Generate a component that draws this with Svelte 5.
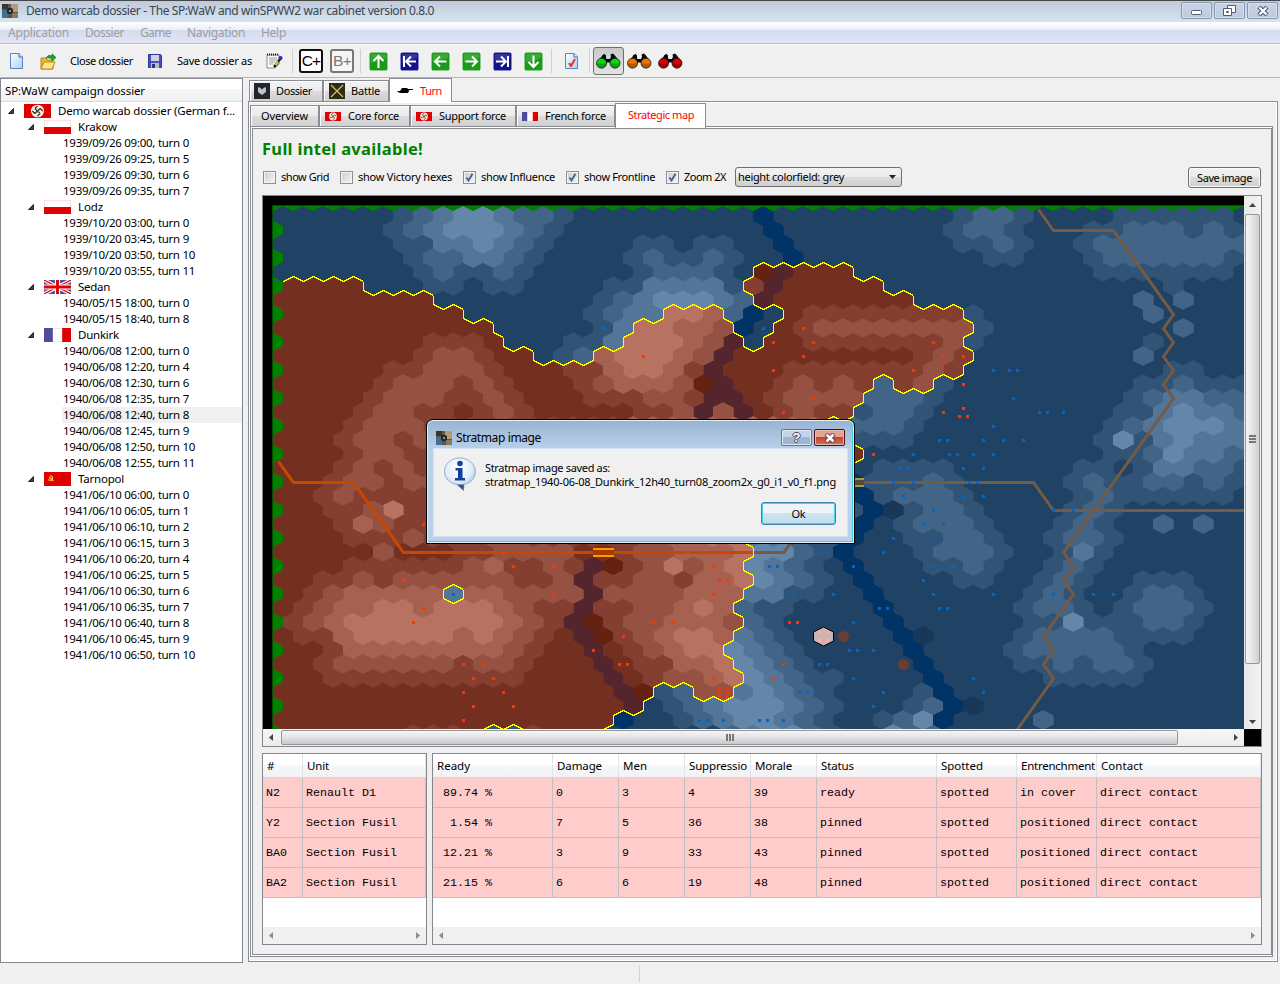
<script>
  // Sets letter spacing so a label takes a given width in pixels
  function fit(node, width) {
    const natural = node.getBoundingClientRect().width;
    const n = node.textContent.length;
    node.style.letterSpacing = (width - natural) / n + 'px';
  }

  const menus = [['Application', 61], ['Dossier', 39], ['Game', 31], ['Navigation', 58], ['Help', 25]];

  const tree = [
    { t: 'Demo warcab dossier (German f...', l: 0, flag: 'de', w: 177 },
    { t: 'Krakow', l: 1, flag: 'pl', w: 39 },
    { t: '1939/09/26 09:00, turn 0' }, { t: '1939/09/26 09:25, turn 5' },
    { t: '1939/09/26 09:30, turn 6' }, { t: '1939/09/26 09:35, turn 7' },
    { t: 'Lodz', l: 1, flag: 'pl', w: 25 },
    { t: '1939/10/20 03:00, turn 0' }, { t: '1939/10/20 03:45, turn 9' },
    { t: '1939/10/20 03:50, turn 10' }, { t: '1939/10/20 03:55, turn 11' },
    { t: 'Sedan', l: 1, flag: 'uk', w: 32 },
    { t: '1940/05/15 18:00, turn 0' }, { t: '1940/05/15 18:40, turn 8' },
    { t: 'Dunkirk', l: 1, flag: 'fr', w: 41 },
    { t: '1940/06/08 12:00, turn 0' }, { t: '1940/06/08 12:20, turn 4' },
    { t: '1940/06/08 12:30, turn 6' }, { t: '1940/06/08 12:35, turn 7' },
    { t: '1940/06/08 12:40, turn 8', sel: true }, { t: '1940/06/08 12:45, turn 9' },
    { t: '1940/06/08 12:50, turn 10' }, { t: '1940/06/08 12:55, turn 11' },
    { t: 'Tarnopol', l: 1, flag: 'su', w: 46 },
    { t: '1941/06/10 06:00, turn 0' }, { t: '1941/06/10 06:05, turn 1' },
    { t: '1941/06/10 06:10, turn 2' }, { t: '1941/06/10 06:15, turn 3' },
    { t: '1941/06/10 06:20, turn 4' }, { t: '1941/06/10 06:25, turn 5' },
    { t: '1941/06/10 06:30, turn 6' }, { t: '1941/06/10 06:35, turn 7' },
    { t: '1941/06/10 06:40, turn 8' }, { t: '1941/06/10 06:45, turn 9' },
    { t: '1941/06/10 06:50, turn 10' }
  ];

  const checks = [['show Grid', 48, false, 10], ['show Victory hexes', 94, false, 10], ['show Influence', 74, true, 10], ['show Frontline', 71, true, 10], ['Zoom 2X', 42, true, 9]];

  const units = [['N2', 'Renault D1'], ['Y2', 'Section Fusil'], ['BA0', 'Section Fusil'], ['BA2', 'Section Fusil']];
  const heads = [['Ready', 33], ['Damage', 45], ['Men', 24], ['Suppressio', 58], ['Morale', 37], ['Status', 33], ['Spotted', 42], ['Entrenchment', 74], ['Contact', 42]];
  const stats = [
    [' 89.74 %', '0', '3', '4', '39', 'ready', 'spotted', 'in cover', 'direct contact'],
    ['  1.54 %', '7', '5', '36', '38', 'pinned', 'spotted', 'positioned', 'direct contact'],
    [' 12.21 %', '3', '9', '33', '43', 'pinned', 'spotted', 'positioned', 'direct contact'],
    [' 21.15 %', '6', '6', '19', '48', 'pinned', 'spotted', 'positioned', 'direct contact']
  ];

  // Hex rows: terrain letter followed by the first column it applies to.
  // Lower case is blue territory, upper case is red; w water, k marsh.
  const terrain = [
    'a0 b6 c7 d8 e9 d11 c12 b14 a15 w24 a25 b34 c35 b37 a38 b42 a48',
    'a0 b5 c6 d7 e8 d11 c12 b13 a14 w24 a25 b33 c34 b36 a37 b40 c42 b45 c46 b47',
    'a0 b6 d8 e10 d11 c12 b13 a14 b18 a20 b21 a23 w25 a26 b34 c36 b37 a38 b40 c41',
    'a0 b6 c7 d9 c11 b12 a13 b17 c18 b19 c21 b22 a23 w25 a26 b35 a37 b40 c41 b47',
    'a0 b7 c8 b9 c11 b12 a13 b18 c19 b22 a23 K24 W25 A26 a29 b41 a48',
    'A0 a4 b7 a9 b10 a12 b16 d18 b22 B23 W24 A25 a30 b44 a45',
    'A0 a8 b16 c17 d18 e19 d22 c23 W24 A25 a32 c43 a44 c45 a46',
    'A0 a9 b15 c16 d17 E19 D21 c22 w23 a24 A25 B26 b34 a35 c43 a44',
    'A0 a11 b16 d17 E18 D20 C22 w23 a24 A25 B26 C27 b35 a36 c45 a46',
    'A0 B7 A10 a11 b14 d16 E17 D20 C21 W22 a23 A24 B26 C33 b34 a35 b43 a44',
    'A0 B7 C8 B10 A11 a13 b14 c15 D16 E17 D20 C21 W22 A23 B32 C33 B34 a35 c43 a44',
    'A0 B5 C7 B10 A11 B14 D16 E17 D19 B20 W21 A22 B25 C32 B33 a34 b44 a46',
    'A0 B5 C6 B9 C10 B11 A12 B15 C16 D17 C20 K21 W22 A23 B25 C26 B27 C28 B29 c30 B31 C32 b33 a34 b43 c45 b46',
    'A0 B4 C5 B8 C10 B11 A12 B15 C18 B20 W21 A23 B24 C25 c29 b32 a33 b42 c43 d44 c46',
    'A0 B4 C5 B7 A9 B10 C11 B12 A13 B18 C20 W21 C22 W23 A24 B25 C26 B27 b29 c30 b32 a33 b42 d44 e45 d46 c48',
    'A0 B3 C4 B7 D17 c27 b31 a32 b41 c42 d43 e44 d47',
    'A0 B3 C4 B6 C7 b29 a32 b41 e42 b43 d44 e45 d46',
    'A0 B3 C4 B6 A28 a29 b41 c43 e44 d45 c47',
    'A0 B3 C4 B5 C6 B7 a29 b30 a34 b40 a42 b43 d44 c46 b48',
    'A0 B2 C3 B5 C6 w28 b29 c32 b33 a34 b39 c40 b41 c43 b45 c46 b47',
    'A0 B2 C3 B4 w29 b30 c31 b34 a35 b40 c41 b42 a48',
    'A0 B2 C4 E5 B6 b28 w29 k30 b31 c32 b34 a35 b39 c40 b41 a42',
    'A0 B3 D4 C5 B6 w29 a30 b31 c32 b35 a36 b39 c40 b41 a42 c44 a45 c46 a47',
    'A0 B3 C6 B7 C10 B12 C18 D19 E21 d23 c25 b26 w28 a29 b31 c33 b35 a36 b38 c39 b41 a42',
    'A0 C5 A6 B9 C11 A15 B17 C18 D20 E23 e24 c26 b27 w28 a29 b32 c33 b36 a37 b39 d40 b41 a42',
    'A0 B3 C9 D10 B11 C13 B14 W15 K16 B17 C18 E19 C20 D21 E22 e23 d24 c25 b26 a27 w28 a29 b32 c34 b35 a36 b38 c39 b40 a41',
    'A0 B2 C4 B5 C6 B12 C14 W15 B16 C18 B20 D21 E23 e24 d25 c26 b27 a28 w29 a30 b34 a36 b38 c39 b40 a41 b43 a46',
    'A0 B1 C2 D3 d8 D9 C11 W15 C16 D20 d23 b25 a27 w29 a30 b37 c38 b39 a40 b42 c43 b45 a46',
    'A0 B1 C2 D3 E5 D7 E8 D11 C12 B13 W15 B16 C18 D20 E21 D22 c23 b24 a26 w30 a31 b37 c38 b40 a41 b42 c43 b46 a47',
    'B0 C1 D2 E3 D11 C12 B13 W14 K15 B16 C17 D19 C22 c23 b24 a25 w30 a31 b37 e39 b40 c43 b45 a46',
    'A0 B1 D3 E4 D9 E10 D11 C12 B13 A14 W15 K16 B17 C18 D19 E20 D22 d23 c24 b25 a26 w31 k32 a33 b37 c38 b42 a46',
    'A0 B2 D3 C11 B12 A13 W15 A16 B17 C18 D19 E20 e22 d23 c24 b25 a26 w31 a32 b36 c37 b42 a43',
    'A0 B2 C3 B9 C10 B12 A13 W16 A17 B18 D20 E22 e23 d24 c25 b26 a27 w32 a33 b37 c39 b40 c41 b43 a44',
    'A0 B2 A12 W16 A17 B18 C19 D21 E22 e23 d24 c25 b26 a28 w32 a33 b38 a43',
    'A0 W17 K18 b19 c20 C21 d23 e24 d25 c26 b27 a28 b32 w33 a34',
    'A0 W17 a18 b19 c20 d21 e22 d25 c26 b27 a28 b31 c32 w33 k34 a35',
    'A0 w17 a18 b20 c21 d22 e23 d25 c26 b27 a28 b30 c31 e32 w33 a34 c38 a39',
    'A0 B6 A9 b10 B12 A13 a16 c22 d23 e24 c26 b27 a28 e30 c31 a33'
  ];
  const fills = {
    a: '#204264', b: '#315375', c: '#426486', d: '#537597', e: '#6486a8', w: '#003366', k: '#18385a',
    A: '#733020', B: '#843f30', C: '#955141', D: '#a66151', E: '#b77262', W: '#54252d', K: '#662211'
  };
  const COLS = 49;
  const grid = terrain.map((row) => {
    const out = [];
    const runs = row.split(' ').map((s) => [s[0], +s.slice(1)]);
    runs.forEach(([k, s], i) => {
      const end = i + 1 < runs.length ? runs[i + 1][1] : COLS;
      for (let c = s; c < end; c++) out[c] = k;
    });
    return out;
  });
  const isRed = (k) => k < 'a';
  const hexAt = (x, y) => `M${x} ${y + 5}l10 -5l10 5v9l-10 5l-10 -5z`;
  const hexes = {};
  let front = '';
  grid.forEach((row, r) => {
    const odd = r % 2;
    row.forEach((k, c) => {
      const x = 273 + 20 * c + odd * 10;
      const y = 206.5 + 14 * r;
      hexes[k] = (hexes[k] || '') + hexAt(x, y);
      const red = isRed(k);
      const right = row[c + 1];
      const next = grid[r + 1] || [];
      const dl = next[c - 1 + odd];
      const dr = next[c + odd];
      if (right && isRed(right) !== red) front += `M${x + 20.5} ${y + 5}v9`;
      if (dl && isRed(dl) !== red) front += `M${x + 0.5} ${y + 14}l10 5`;
      if (dr && isRed(dr) !== red) front += `M${x + 10.5} ${y + 19}l10 -5`;
    });
  });

  const redDots = '643,356 803,328 773,342 813,342 803,356 773,370 913,370 813,398 783,412 873,454 933,342 943,356 963,356 963,384 943,412 963,408 959,416 967,416 423,524 403,580 423,608 413,622 503,552 513,566 553,566 553,594 463,664 483,664 473,678 493,678 463,692 503,692 473,706 513,706 463,720 723,552 713,566 719,580 727,580 713,594 653,622 673,622 789,622 797,622 623,636 593,650 619,664 627,664 783,664 713,678 773,678 719,688 727,688 719,692 727,692 719,696 727,696';
  const blueDots = '603,328 763,328 913,454 899,468 907,468 993,370 1009,370 1017,370 1013,398 1039,412 1047,412 1063,412 993,426 939,440 947,440 983,440 1003,440 1023,440 949,454 957,454 973,454 993,454 963,468 983,468 453,594 893,482 913,482 903,496 893,538 883,552 819,552 827,552 853,566 769,566 777,566 793,594 833,594 879,608 887,608 853,622 849,650 857,650 873,650 819,664 827,664 853,678 799,692 807,692 883,692 873,706 699,720 707,720 723,720 759,720 767,720 783,720 969,482 977,482 963,496 983,496 933,510 1053,510 1073,510 923,524 943,524 933,538 933,566 953,566 923,580 933,594 993,594 1053,594 1093,594 1113,594 939,608 947,608 973,678 983,692';
  const dots = (s) => s.split(' ').map((p) => { const [x, y] = p.split(','); return `M${x - 1} ${y - 1}h3v3h-3z`; }).join('');
</script>

{#snippet flag(kind, w, h)}
  <svg class="flag" width={w} height={h} viewBox="0 0 26 14" preserveAspectRatio="none">
    {#if kind === 'de'}
      <rect width="26" height="14" fill="#e00000" />
      <circle cx="13" cy="7" r="6.3" fill="#f4efe8" />
      <g transform="rotate(45 13 7)" stroke="#4b3a2c" stroke-width="1.4" fill="none">
        <path d="M13 3.4V10.6M9.4 7H16.6M13 3.4H16.6M16.6 7V10.6M13 10.6H9.4M9.4 7V3.4" />
      </g>
    {:else if kind === 'pl'}
      <rect width="26" height="14" fill="#ffdede" /><rect x="1" y="1" width="24" height="7" fill="#fff" />
      <rect y="7" width="26" height="7" fill="#e00000" />
    {:else if kind === 'fr'}
      <rect width="26" height="14" fill="#fff" /><path d="M9 .5h9M9 13.500h9" stroke="#ffdede" /><rect width="8.500" height="14" fill="#4d4d9b" /><rect x="17.500" width="8.500" height="14" fill="#e00000" />
    {:else if kind === 'su'}
      <rect width="26" height="14" fill="#e00000" />
      <path d="M6 3.5q3 1 2 4q-2 1.500 -4 0M5 5l4 4" stroke="#ffd21c" stroke-width="1.200" fill="none" />
    {:else}
      <rect width="26" height="14" fill="#4d4d9b" />
      <path d="M0 0L26 14M26 0L0 14" stroke="#fff" stroke-width="3.600" />
      <path d="M0 0L26 14M26 0L0 14" stroke="#e00000" stroke-width="1.200" />
      <path d="M13 0V14M0 7H26" stroke="#fff" stroke-width="5" />
      <path d="M13 0V14M0 7H26" stroke="#e00000" stroke-width="2.800" />
    {/if}
  </svg>
{/snippet}

{#snippet appIcon()}
  <svg width="16" height="14" viewBox="0 0 16 14">
    <rect width="16" height="14" fill="#5d5547" /><rect width="6" height="5" fill="#3c342c" /><rect x="9" width="7" height="8" fill="#b29a7c" />
    <rect y="6" width="6" height="8" fill="#3f6f94" /><rect x="5" y="4" width="6" height="6" rx="2" fill="#24262a" /><rect x="7" y="6" width="2" height="2" fill="#8d9499" />
    <rect x="10" y="9" width="6" height="5" fill="#8a7a55" />
  </svg>
{/snippet}

{#snippet arrow(color, d)}
  <svg class="tool" width="19" height="19" viewBox="0 0 19 19">
    <rect width="19" height="19" fill="#fff" /><rect x=".5" y=".5" width="18" height="18" rx="1.500" fill={color} />
    <path d="M2 2H17V6L2 11z" fill="#fff" opacity=".14" />
    <path {d} fill="none" stroke="#fff" stroke-width="2" />
  </svg>
{/snippet}

{#snippet binoc(color)}
  <svg width="25" height="16" viewBox="0 0 25 16">
    <path d="M1 9L6 3Q7 1.500 9 3.500L10.500 6H14L15 3.500L14.500 1.500L17 .5L18.500 2L24 9L20 14H15.500L14 9.500H11L9 14H5z" fill="#0a0a0a" />
    <path d="M6 2.500L8.500 .8L10 2.500V5H6z" fill="#0a0a0a" />
    <circle cx="5.500" cy="10.200" r="5" fill={color} stroke="#111" stroke-width=".7" />
    <circle cx="19" cy="10.200" r="5" fill={color} stroke="#111" stroke-width=".7" />
    <path d="M.8 10.500h9.400a4.700 4.700 0 0 1-9.400 0zM14.300 10.500h9.400a4.700 4.700 0 0 1-9.400 0z" fill="#000" opacity=".25" />
  </svg>
{/snippet}

{#snippet page()}
  <svg width="13" height="16" viewBox="0 0 13 16">
    <defs><linearGradient id="pg" x1="0" y1="0" x2="1" y2="1"><stop offset="0" stop-color="#fff" /><stop offset="1" stop-color="#a9d1f7" /></linearGradient></defs>
    <path d="M.5 .5H9L12.500 4V15.500H.5z" fill="url(#pg)" stroke="#5b86c4" /><path d="M9 .5V4h3.500" fill="#dcecff" stroke="#3f66a8" />
  </svg>
{/snippet}

<div class="window">
  <header class="title">
    {@render appIcon()}
    <span class="name" use:fit={408}>Demo warcab dossier - The SP:WaW and winSPWW2 war cabinet version 0.8.0</span>
    <div class="winbtns">
      <i><svg class="min" width="12" height="6"><rect x=".5" y=".5" width="10" height="4" rx="1" fill="#fff" stroke="#545c70" /></svg></i>
      <i><svg width="13" height="12" fill="#fff" stroke="#545c70"><path d="M4.500 .5h8v7h-8z" /><path d="M.5 3.500h8v7h-8z" /><path d="M3.500 6.500h2v1h-2z" /></svg></i>
      <i><svg width="12" height="10" viewBox="0 0 12 10"><path d="M2 1l8 8M10 1l-8 8" stroke="#545c70" stroke-width="4.400" /><path d="M2.500 1.500l7 7M9.500 1.500l-7 7" stroke="#fff" stroke-width="2.200" /></svg></i>
    </div>
  </header>
  <nav class="menu">
    {#each menus as [m, w]}<span use:fit={w}>{m}</span>{/each}
  </nav>
  <div class="toolbar">
    <span class="cell c1">{@render page()}</span>
    <span class="cell c2"><svg width="17" height="17" viewBox="0 0 17 17"><path d="M1 5h5l1 2h6v9H1z" fill="#e9b93a" stroke="#b98a1a" /><path d="M1 16l3-7h11l-3 7z" fill="#ffe48a" stroke="#b98a1a" /><path d="M6 5q2-4 6-2V.8L16 4.500l-4 3.500V6Q9 4 6 5z" fill="#2aa02a" stroke="#0f6a12" stroke-width=".6" /></svg></span>
    <span class="cell c3"><span use:fit={63}>Close dossier</span></span>
    <span class="cell c4"><svg width="14" height="14" viewBox="0 0 14 14"><path d="M.5 .5h12l1 1v12h-13z" fill="#4a50b8" stroke="#2f3590" /><rect x="3" y="1" width="8" height="6" fill="#cfd4e4" /><rect x="3" y="9" width="8" height="5" fill="#b7bccd" /><rect x="4" y="10" width="3" height="4" fill="#30356a" /></svg></span>
    <span class="cell c5"><span use:fit={75}>Save dossier as</span></span>
    <span class="cell c6"><svg width="17" height="16" viewBox="0 0 17 16"><path d="M1 2h12v9l-4 4H1z" fill="#fff" stroke="#888" /><path d="M1 1.500h12" stroke="#222" stroke-width="2" stroke-dasharray="1 1" /><path d="M3 5h8M3 7h8M3 9h6M3 11h4" stroke="#999" /><path d="M8 14l7-9" stroke="#222" stroke-width="2.600" /><path d="M9.500 12l2.500-3.500" stroke="#f0d840" stroke-width="1.800" /><circle cx="14.500" cy="5" r="2" fill="#2030c0" /></svg></span>
    <b class="vsep"></b>
    <span class="box c7">C+</span><span class="box dim">B+</span>
    <b class="vsep s2"></b>
    <span class="arrows">
      {@render arrow('#199a19', 'M9.500 16V4M4.500 9l5-5 5 5')}
      {@render arrow('#12128c', 'M4 4v11M16 9.500H6M11 4.500l-5 5 5 5')}
      {@render arrow('#199a19', 'M15.500 9.500H4M9 4.500l-5 5 5 5')}
      {@render arrow('#199a19', 'M3.500 9.500H15M10 4.500l5 5-5 5')}
      {@render arrow('#12128c', 'M15 4v11M3 9.500H13M8 4.500l5 5-5 5')}
      {@render arrow('#199a19', 'M9.500 3.500V15M4.500 10l5 5 5-5')}
    </span>
    <b class="vsep s3"></b>
    <span class="chk-doc">{@render page()}<svg class="tick" width="8" height="9" viewBox="0 0 8 9"><path d="M1 5l2 3L7 1" fill="none" stroke="#e8301c" stroke-width="2" /></svg></span>
    <b class="vsep s4"></b>
    <span class="pressed">{@render binoc('#12d412')}</span>
    <span class="bin">{@render binoc('#e87800')}</span>
    <span class="bin">{@render binoc('#d80000')}</span>
  </div>

  <main>
    <aside>
      <div class="ahead"><span use:fit={140}>SP:WaW campaign dossier</span></div>
      <ul>
        {#each tree as n}
          <li class:top={n.l === 0} class:mid={n.l === 1} class:sel={n.sel}>
            {#if n.flag}
              <svg class="tri" width="6" height="6"><path d="M5.500 .5v5h-5z" fill="#404040" stroke="#262626" /></svg>
              {@render flag(n.flag, 27, 14)}
              <span use:fit={n.w}>{n.t}</span>
            {:else}
              <em><span use:fit={n.t.length === 25 ? 132 : 126}>{n.t}</span></em>
            {/if}
          </li>
        {/each}
      </ul>
    </aside>

    <section class="work">
      <div class="tabs outer">
        <div class="tab o1"><svg width="16" height="16"><rect width="16" height="16" fill="#22262a" /><path d="M4 4l2.500 1L8 6.500l1.500-1.500L12 4v5l-4 3L4 9z" fill="#b8c4d0" /></svg><span use:fit={36}>Dossier</span></div>
        <div class="tab o2"><svg width="16" height="16"><rect width="16" height="16" fill="#2e2a18" /><path d="M2 2l12 12M14 2L2 14" stroke="#d8bc60" stroke-width="1.300" /></svg><span use:fit={29}>Battle</span></div>
        <div class="tab o3 on"><svg width="17" height="8" viewBox="0 0 17 8"><path d="M0 4h3l2-3h5l1 1h5v1h-5l2 1h-1l-1 2H3L1 5z" fill="#000" /></svg><span use:fit={22}>Turn</span></div>
      </div>
      <div class="pane">
        <div class="tabs inner">
          <div class="tab i1"><span use:fit={47}>Overview</span></div>
          <div class="tab i2">{@render flag('de', 16, 9)}<span use:fit={51}>Core force</span></div>
          <div class="tab i3">{@render flag('de', 16, 9)}<span use:fit={67}>Support force</span></div>
          <div class="tab i4">{@render flag('fr', 16, 9)}<span use:fit={61}>French force</span></div>
          <div class="tab i5 on"><span use:fit={66}>Strategic map</span></div>
        </div>
        <div class="pane2">
          <div class="content">
            <h1><span use:fit={161}>Full intel available!</span></h1>
            <div class="options">
              {#each checks as [label, w, on, gap]}
                <label style:margin-right="{gap}px"><i class="cb">{#if on}<svg width="9" height="9" viewBox="0 0 9 9"><path d="M1.500 4.500l2 3L7.500 .8" fill="none" stroke="#4a5f97" stroke-width="1.900" /></svg>{/if}</i><span use:fit={w}>{label}</span></label>
              {/each}
              <div class="select"><span use:fit={106}>height colorfield: grey</span><svg width="7" height="4"><path d="M0 0h7L3.500 4z" fill="#222" /></svg></div>
              <div class="save"><span use:fit={55}>Save image</span></div>
            </div>

            <div class="mapbox">
              <svg class="map" width="981" height="533" viewBox="263 196 981 533">
                <rect x="263" y="196" width="981" height="533" fill="#000" />
                <rect x="272" y="205" width="980" height="540" fill="#005000" />
                <rect x="273" y="206" width="980" height="540" fill="#008000" />
                <g shape-rendering="crispEdges">
                  {#each Object.entries(hexes) as [k, d]}<path {d} fill={fills[k]} stroke={fills[k]} stroke-width=".7" />{/each}
                </g>
                <g fill="none" stroke-width="3">
                  <path stroke="#755a46" d="M1038.500 209.500L1053.500 230.500H1113.500L1173.500 314.500L1163.500 328.500L1173.500 342.500L1163.500 356.500L1173.500 370.500L1163.500 384.500L1173.500 398.500L1063.500 552.500L1073.500 566.500L1063.500 580.500L1073.500 594.500L1043.500 636.500L1053.500 650.500L1043.500 664.500L1053.500 678.500L1017 730" />
                  <path stroke="#755a46" d="M750 552.500H784L803 524M850 482.500H1033.500L1053.500 510.500H1244" />
                  <path stroke="#c84800" d="M278.500 461.500L293.500 482.500H353.500L403.500 552.500H753" />
                </g>
                <g shape-rendering="crispEdges">
                  <rect x="593" y="548" width="21" height="9" fill="#ff9900" /><rect x="593" y="550" width="21" height="5" fill="#a83a00" />
                  <rect x="843" y="478" width="21" height="9" fill="#a0a040" /><rect x="843" y="480" width="21" height="5" fill="#54493f" />
                  <path d={front} fill="none" stroke="#ffff00" stroke-width="1" />
                  <path d={dots(redDots)} fill="#ff3300" />
                  <path d={dots(blueDots)} fill="#0066cc" />
                </g>
                <circle cx="843.500" cy="636.500" r="5.500" fill="#673f35" /><circle cx="903.500" cy="664.500" r="5.500" fill="#673f35" />
                <path d={hexAt(813.5, 627)} fill="#cdb4b2" stroke="#000" />
                <path d="M818 631h3v3h-3zM826 631h3v3h-3zM818 639h3v3h-3zM826 639h3v3h-3z" fill="#ffad9b" />
              </svg>
              <div class="vbar">
                <svg width="7" height="4"><path d="M0 4h7L3.500 0z" fill="#444" /></svg>
                <div class="thumb v"><b></b><b></b><b></b></div>
                <svg width="7" height="4"><path d="M0 0h7L3.500 4z" fill="#444" /></svg>
              </div>
              <div class="hbar">
                <svg width="4" height="7"><path d="M4 0v7L0 3.500z" fill="#444" /></svg>
                <div class="thumb h"><b></b><b></b><b></b></div>
                <svg class="end" width="4" height="7"><path d="M0 0v7l4-3.500z" fill="#444" /></svg>
              </div>
              <div class="corner"></div>
            </div>

            <div class="tables">
              <div class="table left">
                <div class="row head"><div><span use:fit={8}>#</span></div><div><span use:fit={22}>Unit</span></div></div>
                {#each units as u}<div class="row">{#each u as v}<div>{v}</div>{/each}</div>{/each}
                <div class="tbar"><svg width="4" height="7"><path d="M4 0v7L0 3.500z" fill="#8c8c8c" /></svg><svg width="4" height="7"><path d="M0 0v7l4-3.500z" fill="#8c8c8c" /></svg></div>
              </div>
              <div class="table right">
                <div class="row head">{#each heads as [h, w]}<div><span use:fit={w}>{h}</span></div>{/each}</div>
                {#each stats as s}<div class="row">{#each s as v}<div>{v}</div>{/each}</div>{/each}
                <div class="tbar"><svg width="4" height="7"><path d="M4 0v7L0 3.500z" fill="#8c8c8c" /></svg><svg width="4" height="7"><path d="M0 0v7l4-3.500z" fill="#8c8c8c" /></svg></div>
              </div>
            </div>
          </div>
        </div>
      </div>
    </section>
  </main>
  <footer><b></b></footer>

  <div class="dialog">
    <div class="dtitle">
      {@render appIcon()}<span use:fit={85}>Stratmap image</span>
      <i class="q">?</i>
      <i class="x"><svg width="12" height="10" viewBox="0 0 12 10"><path d="M2 1l8 8M10 1l-8 8" stroke="#5a3a40" stroke-width="4.400" /><path d="M2.500 1.500l7 7M9.500 1.500l-7 7" stroke="#fff" stroke-width="2.600" /></svg></i>
    </div>
    <div class="dbody">
      <svg class="info" width="34" height="34" viewBox="0 0 34 34">
        <defs><radialGradient id="ib" cx=".45" cy=".3" r=".75"><stop offset="0" stop-color="#fff" /><stop offset=".55" stop-color="#e3edf9" /><stop offset="1" stop-color="#8fb4dd" /></radialGradient></defs>
        <path d="M17 1C8 1 1.500 7 1.500 14.500S8 27 14 27.500l6.500 6 .5-6C28 26 32.500 21 32.500 14.500S26 1 17 1z" fill="url(#ib)" stroke="#9aaec6" />
        <path d="M14 27.500l6.500 6 .5-6z" fill="#3a5585" />
        <circle cx="17" cy="6.500" r="2.800" fill="#1440a0" /><path d="M12.500 11h7v10h2.500v2.500h-10V21h3v-7.500h-2.500z" fill="#1440a0" />
      </svg>
      <p><span use:fit={125}>Stratmap image saved as:</span><br /><span use:fit={351}>stratmap_1940-06-08_Dunkirk_12h40_turn08_zoom2x_g0_i1_v0_f1.png</span></p>
      <div class="ok"><span use:fit={14}>Ok</span></div>
    </div>
  </div>
</div>

<style>
  :global(body) { margin: 0; background: #f0f0f0; }
  .window { position: relative; width: 1280px; height: 984px; display: flex; flex-direction: column; background: #f0f0f0; font: 11px/14px "Noto Sans", "Open Sans", sans-serif; color: #000; overflow: hidden; }
  .window :global(*) { box-sizing: border-box; }
  span { white-space: nowrap; }
  i { font-style: normal; }
  svg { display: block; flex: none; }
  .title { height: 22px; flex: none; border-top: 1px solid #474747; background: linear-gradient(#bfcadb, #d6e4f0); display: flex; align-items: center; padding: 0 0 2px 2px; font-size: 12px; color: #3c4650; }
  .name { margin-left: 8px; }
  .winbtns { margin-left: auto; display: flex; gap: 2px; padding-right: 2px; height: 17px; }
  .winbtns i { width: 31px; height: 17px; border: 1px solid #8497b4; border-radius: 2px; box-shadow: inset 0 0 0 1px #d5e0ee; display: flex; align-items: center; justify-content: center; background: linear-gradient(#c8d4e4, #bccadd); }
  .min { margin-top: 4px; }
  .menu { height: 22px; flex: none; background: linear-gradient(#fff 0, #e9edf5 8px, #d5daed 8px, #e1e6f6 100%); border-bottom: 1px solid #b4bacb; display: flex; align-items: center; gap: 16px; padding-left: 8px; font-size: 12px; color: #9b9da5; }
  .toolbar { height: 34px; flex: none; border-top: 1px solid #fff; border-bottom: 1px solid #b6b6b6; display: flex; align-items: center; }
  .cell { display: flex; align-items: center; }
  .c1 { width: 40px; padding-left: 10px; } .c2 { width: 30px; } .c3 { width: 78px; } .c4 { width: 29px; } .c5 { width: 89px; } .c6 { width: 26px; }
  .vsep { width: 1px; height: 24px; background: #d0d0d0; }
  .box { width: 24px; height: 24px; border: 2px solid #111; border-radius: 3px; background: #fff; font: 15.500px/20px "Liberation Sans", sans-serif; text-align: center; letter-spacing: -.8px; }
  .c7 { margin-left: 6px; margin-right: 7px; }
  .dim { border-color: #777; color: #777; background: #f6f6f6; }
  .s2 { margin: 0 8px 0 6px; }
  .arrows { display: flex; gap: 12px; }
  .s3 { margin: 0 13px 0 8px; }
  .chk-doc { position: relative; }
  .tick { position: absolute; left: 3px; top: 5px; }
  .s4 { margin: 0 3px 0 11px; }
  .pressed { width: 31px; height: 28px; border: 1px solid #6e6e6e; border-radius: 3px; background: linear-gradient(#c9c9c9, #e2e2e2); display: flex; align-items: center; justify-content: center; }
  .bin { margin-left: 3px; width: 28px; }
  main { height: 885px; flex: none; display: flex; }
  aside { width: 243px; border: 1px solid #828790; background: #fff; }
  .ahead { height: 23px; padding: 5px 0 0 4px; background: linear-gradient(#fff 0, #fff 45%, #f5f6f8 45%, #f0f1f3); border-bottom: 1px solid #d8dade; font-size: 11.500px; }
  ul { list-style: none; margin: 1px 0 0; padding: 0; font-size: 11.500px; }
  li { height: 16px; display: flex; align-items: center; line-height: 16px; }
  li.top { padding-left: 7px; } li.mid { padding-left: 27px; }
  .tri { margin-right: 10px; }
  li .tri + :global(.flag) { margin-right: 7px; }
  em { font-style: normal; margin-left: 61px; flex: 1; padding-left: 1px; height: 16px; display: flex; }
  .sel em { background: #f0f0f0; }
  .work { width: 1031px; margin-left: 5px; display: flex; flex-direction: column; }
  .tabs { display: flex; align-items: flex-end; }
  .tab { border: 1px solid #898c95; border-bottom: 0; background: linear-gradient(#f2f2f2 0, #ebebeb 50%, #dcdcdc 50%, #d0d0d0); display: flex; align-items: center; height: 21px; box-shadow: inset 1px 1px #fff; }
  .tab.on { background: #fff; color: #f00; position: relative; z-index: 1; }
  .outer { height: 23px; padding-left: 1px; }
  .o1 { width: 74px; padding-left: 4px; gap: 6px; } .o2 { width: 66px; padding-left: 5px; gap: 6px; } .o3 { width: 63px; height: 24px; margin-bottom: -1px; padding-left: 7px; gap: 6px; color: #ff0020 !important; }
  .pane { flex: 1; border: 1px solid #898c95; margin-right: 1px; background: #f0f0f0; box-shadow: inset 0 0 0 1px #fff; padding: 1px 4px 4px 1px; display: flex; flex-direction: column; margin-bottom: 1px; }
  .inner { height: 23px; }
  .inner .tab { height: 21px; }
  .i1 { width: 69px; padding-left: 10px; } .i2 { width: 91px; padding-left: 5px; gap: 7px; } .i3 { width: 106px; padding-left: 5px; gap: 7px; } .i4 { width: 99px; padding-left: 5px; gap: 7px; }
  .inner .i5 { width: 91px; height: 25px; margin-bottom: -2px; padding: 0 0 2px 12px; }
  .pane2 { flex: 1; border: 1px solid #898c95; background: #fff; padding: 1px; display: flex; }
  .content { flex: 1; border: 1px solid #898c95; background: #f0f0f0; padding: 9px 9px 0; }
  h1 { margin: 0; font: bold 16.500px/22px "Noto Sans", sans-serif; color: #008000; height: 27px; }
  .options { display: flex; align-items: flex-start; height: 22px; margin-top: 2px; }
  label { display: flex; align-items: center; gap: 5px; height: 20px; }
  .cb { width: 13px; height: 13px; border: 1px solid #8e8f8f; background: linear-gradient(135deg, #c8ccd2, #f6f6f6); box-shadow: inset 0 0 0 1px #f4f4f4; display: flex; align-items: center; justify-content: center; margin-left: 1px; }
  .select { width: 167px; height: 20px; border: 1px solid #707070; border-radius: 3px; background: linear-gradient(#f2f2f2 0, #ebebeb 50%, #dddddd 50%, #cfcfcf); display: flex; align-items: center; justify-content: space-between; padding: 0 5px 0 2px; }
  .save { margin-left: auto; margin-right: 1px; width: 73px; height: 21px; border: 1px solid #707070; border-radius: 3px; background: linear-gradient(#f2f2f2 0, #ebebeb 50%, #dddddd 50%, #cfcfcf); display: flex; align-items: center; justify-content: center; box-shadow: inset 0 0 0 1px #fafafa; }
  .mapbox { width: 1000px; height: 552px; margin-top: 6px; border: 1px solid #828790; display: grid; grid-template: 533px 17px / 981px 17px; background: #f0f0f0; }
  .vbar { background: linear-gradient(90deg, #e9e9e9, #f2f2f2); display: flex; flex-direction: column; align-items: center; padding: 7px 0 5px; }
  .hbar { background: linear-gradient(#f6f6f6, #ececec); display: flex; align-items: center; padding: 0 6px; }
  .thumb { border: 1px solid #979797; border-radius: 2px; display: flex; align-items: center; justify-content: center; gap: 1px; }
  .thumb.v { width: 15px; height: 450px; margin: 7px 0 56px; flex-direction: column; background: linear-gradient(90deg, #f5f5f5, #e4e4e6 50%, #cfcfd2); }
  .thumb.h { height: 15px; width: 897px; margin-left: 8px; background: linear-gradient(#f5f5f5, #e4e4e6 50%, #c8c8ca); }
  .v b { width: 7px; height: 2px; background: #777; } .h b { width: 2px; height: 7px; background: #777; }
  .end { margin-left: auto; }
  .corner { background: #000; }
  .tables { display: flex; gap: 5px; margin-top: 6px; }
  .table { border: 1px solid #828790; background: #fff; height: 192px; display: flex; flex-direction: column; font: 11.670px/13px "Liberation Mono", monospace; }
  .left { width: 165px; } .right { width: 830px; }
  .row { display: grid; height: 30px; flex: none; background: #ffcccc; }
  .left .row { grid-template-columns: 40px 1fr; }
  .right .row { grid-template-columns: 120px 66px 66px 66px 66px 120px 80px 80px 1fr; }
  .row div { border-right: 1px solid #c0c0c0; border-bottom: 1px solid #c0c0c0; padding: 9px 0 0 3px; white-space: pre; }
  .row.head { height: 24px; background: linear-gradient(#fff 0, #fff 45%, #f6f7f9 45%, #f0f2f4); font: 11.500px/14px "Noto Sans", sans-serif; }
  .row.head div { padding: 5px 0 0 4px; border-color: #dfe1e5 #e2e4e8 #d5d7db; }
  .tbar { margin-top: auto; height: 17px; background: #f0f0f0; display: flex; align-items: center; justify-content: space-between; padding: 0 6px; }
  footer { flex: 1; display: flex; align-items: center; padding-left: 639px; }
  footer b { width: 1px; height: 17px; background: #d4d4d4; }
  .dialog { position: absolute; left: 426px; top: 419px; width: 429px; height: 125px; border: 1px solid #000; border-radius: 7px 7px 0 0; background: linear-gradient(#98b3d3, #bad1ea 30px, #b9d1ea); box-shadow: inset 0 0 0 1px #e4f0fa, inset -1px -1px 0 1px #3fd0e8; padding: 1px 7px 7px 7px; }
  .dtitle { height: 28px; display: flex; align-items: center; padding: 6px 0 0 2px; font-size: 12px; }
  .dtitle span { margin-left: 4px; }
  .q, .x { width: 31px; height: 17px; border-radius: 2px; display: flex; align-items: center; justify-content: center; margin-bottom: 1px; }
  .q { margin-left: auto; margin-right: 2px; border: 1px solid #5d7796; background: linear-gradient(#c5d5e8 50%, #9db6d3 50%); box-shadow: inset 0 0 0 1px #dce8f4; font: bold 13px/15px "Liberation Sans", sans-serif; color: #fff; text-shadow: 1px 0 #445, -1px 0 #445, 0 1px #445, 0 -1px #445; }
  .x { border: 1px solid #4a1218; background: linear-gradient(#e6a394 50%, #c2452c 50%, #d6705c); box-shadow: inset 0 0 0 1px #eab8ac; margin-right: 2px; }
  .dbody { height: 87px; background: #f0f0f0; display: grid; grid-template-columns: 51px 1fr; position: relative; outline: 1px solid #d5e3f2; }
  .info { margin: 8px 0 0 9px; }
  p { margin: 12px 0 0; line-height: 14px; }
  .ok { position: absolute; right: 11px; bottom: 11px; width: 75px; height: 23px; border: 1px solid #3c7fb1; border-radius: 3px; box-shadow: inset 0 0 0 1px #48d0f0; background: linear-gradient(#eef5fa 50%, #cfe4ef 50%, #c0dcea); display: flex; align-items: center; justify-content: center; }
</style>
